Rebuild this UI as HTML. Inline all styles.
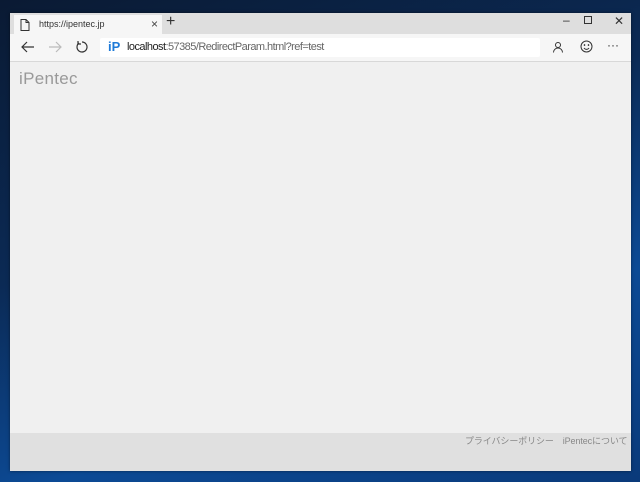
<!DOCTYPE html><html><head><meta charset="utf-8"><style>
body{margin:0;width:640px;height:482px;overflow:hidden;position:relative;font-family:"Liberation Sans","Noto Sans CJK JP",sans-serif;
background:linear-gradient(160deg,#0a1a33 0%,#0b2a55 40%,#0c4a95 70%,#0a3a7a 100%);}
.win{position:absolute;left:10px;top:13px;width:621px;height:458px;background:#f0f0f0;box-shadow:0 0 3px rgba(0,0,0,.5)}
.tabbar{position:absolute;left:0;top:0;width:621px;height:21px;background:#dedede}
.tab{position:absolute;left:4px;top:2px;width:148px;height:19px;background:#f6f6f6}
.tb{position:absolute;left:0;top:21px;width:621px;height:27px;background:#f6f6f6;border-bottom:1px solid #d8d8d8}
.addr{position:absolute;left:90px;top:4px;width:440px;height:19px;background:#fff;border-radius:2px}
.t{position:absolute;white-space:nowrap}
.footer{position:absolute;left:0;top:420px;width:621px;height:38px;background:#e0e0e0}
</style></head><body><div class="win">
<div class="tabbar"><div class="tab">
<svg class="t" style="left:6px;top:4px" width="10" height="12"><path d="M1 .5h5l3 3v8H1z M6 .5v3h3" fill="none" stroke="#333"/></svg>
<span class="t" style="left:25px;top:4px;font-size:9px;color:#333">https://ipentec.jp</span>
<span class="t" style="left:137px;top:2px;font-size:12px;color:#444">×</span></div>
<span class="t" style="left:156px;top:0px;font-size:16px;color:#333">+</span>
<span class="t" style="left:553px;top:0px;font-size:12px;color:#333">–</span>
<svg class="t" style="left:574px;top:3px" width="9" height="9"><rect x=".5" y=".5" width="7" height="7" fill="none" stroke="#333"/></svg>
<span class="t" style="left:604px;top:1px;font-size:12px;color:#333">✕</span>
</div>
<div class="tb">
<svg class="t" style="left:11px;top:7px" width="14" height="12"><path d="M13 6H1M6 1L1 6l5 5" fill="none" stroke="#333" stroke-width="1.2"/></svg>
<svg class="t" style="left:38px;top:7px" width="14" height="12"><path d="M1 6h12M8 1l5 5-5 5" fill="none" stroke="#bbb" stroke-width="1.2"/></svg>
<svg class="t" style="left:65px;top:6px" width="14" height="14"><path d="M4 3A5 5 0 1 0 7 2" fill="none" stroke="#333" stroke-width="1.2"/><path d="M3 1v3h3" fill="none" stroke="#333" stroke-width="1.2"/></svg>
<div class="addr">
<span class="t" style="left:8px;top:1px;font-size:13px;font-weight:bold;color:#1e7ad8">iP</span>
<span class="t" style="left:27px;top:3px;font-size:11px;letter-spacing:-.55px;color:#666"><span style="color:#222">localhost</span>:57385/RedirectParam.html?ref=test</span></div>
<svg class="t" style="left:542px;top:7px" width="12" height="12"><circle cx="6" cy="4" r="2.5" fill="none" stroke="#333"/><path d="M1.5 11.5a4.5 4.5 0 0 1 9 0" fill="none" stroke="#333"/></svg>
<svg class="t" style="left:570px;top:6px" width="13" height="13"><circle cx="6.5" cy="6.5" r="5.5" fill="none" stroke="#333"/><path d="M4 8a3 3 0 0 0 5 0" fill="none" stroke="#333"/><circle cx="4.5" cy="5" r=".8"/><circle cx="8.5" cy="5" r=".8"/></svg>
<span class="t" style="left:597px;top:4px;font-size:12px;color:#333">···</span>
</div>
<span class="t" style="left:9px;top:56px;font-size:17px;color:#999;letter-spacing:.3px">iPentec</span>
<div class="footer"><span class="t" style="left:455px;top:1px;font-size:9px;letter-spacing:-.1px;color:#888">プライバシーポリシー　iPentecについて</span></div>
</div></body></html>
